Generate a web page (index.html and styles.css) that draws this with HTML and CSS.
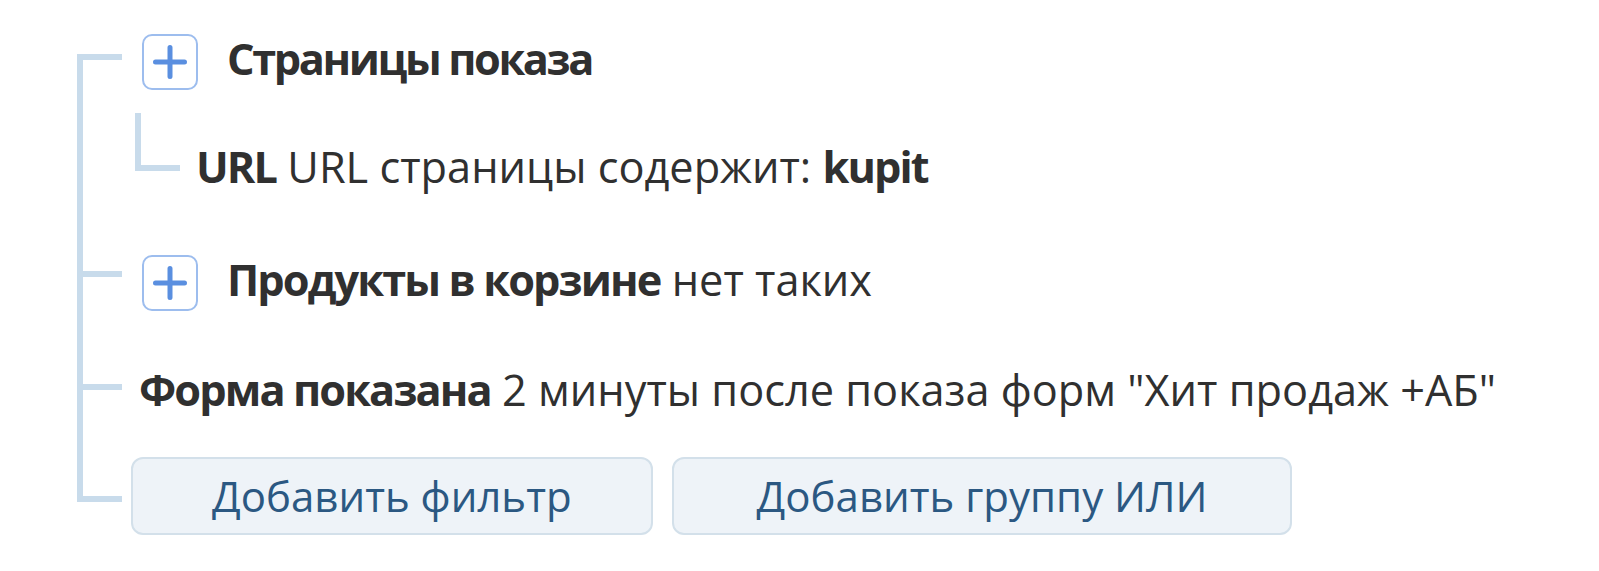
FILE: index.html
```html
<!DOCTYPE html>
<html lang="ru">
<head>
<meta charset="utf-8">
<title>Фильтры</title>
<link rel="stylesheet" href="styles.css">
</head>
<body>
<div class="tree">
  <div class="item item-first item-1">
    <div class="conn"><div class="conn-top"></div><div class="conn-rest"></div></div>
    <div class="body">
      <div class="head">
        <span class="plus"><svg width="36" height="36" viewBox="0 0 36 36"><path d="M18 3.5V32.5M3.5 18H32.5" stroke="#5a8fe0" stroke-width="5" stroke-linecap="round" fill="none"/></svg></span>
        <span class="head-text"><b class="wide">Страницы показа</b></span>
      </div>
      <div class="sub">
        <div class="sub-conn"></div>
        <div class="sub-text"><b>URL</b> URL страницы содержит: <b>kupit</b></div>
      </div>
    </div>
  </div>
  <div class="item item-2">
    <div class="conn"><div class="conn-top"></div><div class="conn-rest"></div></div>
    <div class="body">
      <div class="head">
        <span class="plus"><svg width="36" height="36" viewBox="0 0 36 36"><path d="M18 3.5V32.5M3.5 18H32.5" stroke="#5a8fe0" stroke-width="5" stroke-linecap="round" fill="none"/></svg></span>
        <span class="head-text"><b>Продукты в корзине</b> нет таких</span>
      </div>
    </div>
  </div>
  <div class="item item-3">
    <div class="conn"><div class="conn-top"></div><div class="conn-rest"></div></div>
    <div class="body">
      <div class="line-text"><b>Форма показана</b> 2 минуты после показа форм "Хит продаж +АБ"</div>
    </div>
  </div>
  <div class="item item-last item-4">
    <div class="conn"><div class="conn-top"></div><div class="conn-rest"></div></div>
    <div class="body">
      <div class="buttons">
        <button class="btn">Добавить фильтр</button>
        <button class="btn btn-or">Добавить группу ИЛИ</button>
      </div>
    </div>
  </div>
</div>
</body>
</html>
```
FILE: styles.css
```css
html, body {
  margin: 0;
  padding: 0;
  background: #ffffff;
}

.tree {
  margin-left: 77px;
  padding-top: 34px;
  font-family: "Open Sans", "Noto Sans", sans-serif;
  font-size: 43.3px;
  color: #303030;
}

.tree b {
  font-weight: 700;
  letter-spacing: -1.9px;
}

.tree b.wide {
  letter-spacing: -2.4px;
}

.item {
  display: flex;
  align-items: stretch;
}

.conn {
  width: 45px;
  flex: none;
  display: flex;
  flex-direction: column;
}

.conn-top {
  flex: none;
  border-left: 6px solid #c8dbeb;
  border-bottom: 6px solid #c8dbeb;
}

.conn-rest {
  flex: 1;
  border-left: 6px solid #c8dbeb;
}

.item-first .conn-top {
  border-left: none;
}

.item-last .conn-rest {
  border-left: none;
}

.item-1 .conn-top { height: 20px; }
.item-2 .conn-top { height: 16px; }
.item-3 .conn-top { height: 19px; }
.item-4 .conn-top { height: 39px; }

.body {
  margin-left: 9px;
  flex: 1;
}

.item-1 .body { padding-bottom: 63px; }
.item-2 .body { padding-bottom: 54px; }
.item-3 .body { padding-bottom: 42px; }

.head {
  display: flex;
  align-items: flex-start;
}

.plus {
  width: 56px;
  height: 56px;
  box-sizing: border-box;
  border: 2px solid #9dbdee;
  border-radius: 10px;
  margin-left: 11px;
  margin-right: 29px;
  display: flex;
  align-items: center;
  justify-content: center;
  flex: none;
  background: #ffffff;
}

.plus svg {
  display: block;
}

.head-text,
.sub-text,
.line-text {
  line-height: 50px;
  white-space: nowrap;
}

.sub {
  display: flex;
  align-items: flex-start;
  margin-top: 23px;
  margin-left: 4px;
}

.sub-conn {
  width: 45px;
  height: 58px;
  box-sizing: border-box;
  border-left: 6px solid #c8dbeb;
  border-bottom: 6px solid #c8dbeb;
  flex: none;
}

.sub-text {
  margin-left: 16px;
  margin-top: 29px;
}

.line-text {
  padding-left: 8px;
}

.buttons {
  display: flex;
  gap: 19px;
}

.btn {
  height: 78px;
  box-sizing: border-box;
  padding: 0 79px;
  border: 2px solid #d3e0ea;
  border-radius: 12px;
  background: #eef3f8;
  color: #2b5882;
  font-family: "Open Sans", "Noto Sans", sans-serif;
  font-size: 42px;
  line-height: 74px;
  white-space: nowrap;
  cursor: pointer;
}

.btn-or {
  padding: 0 83px;
}
```
